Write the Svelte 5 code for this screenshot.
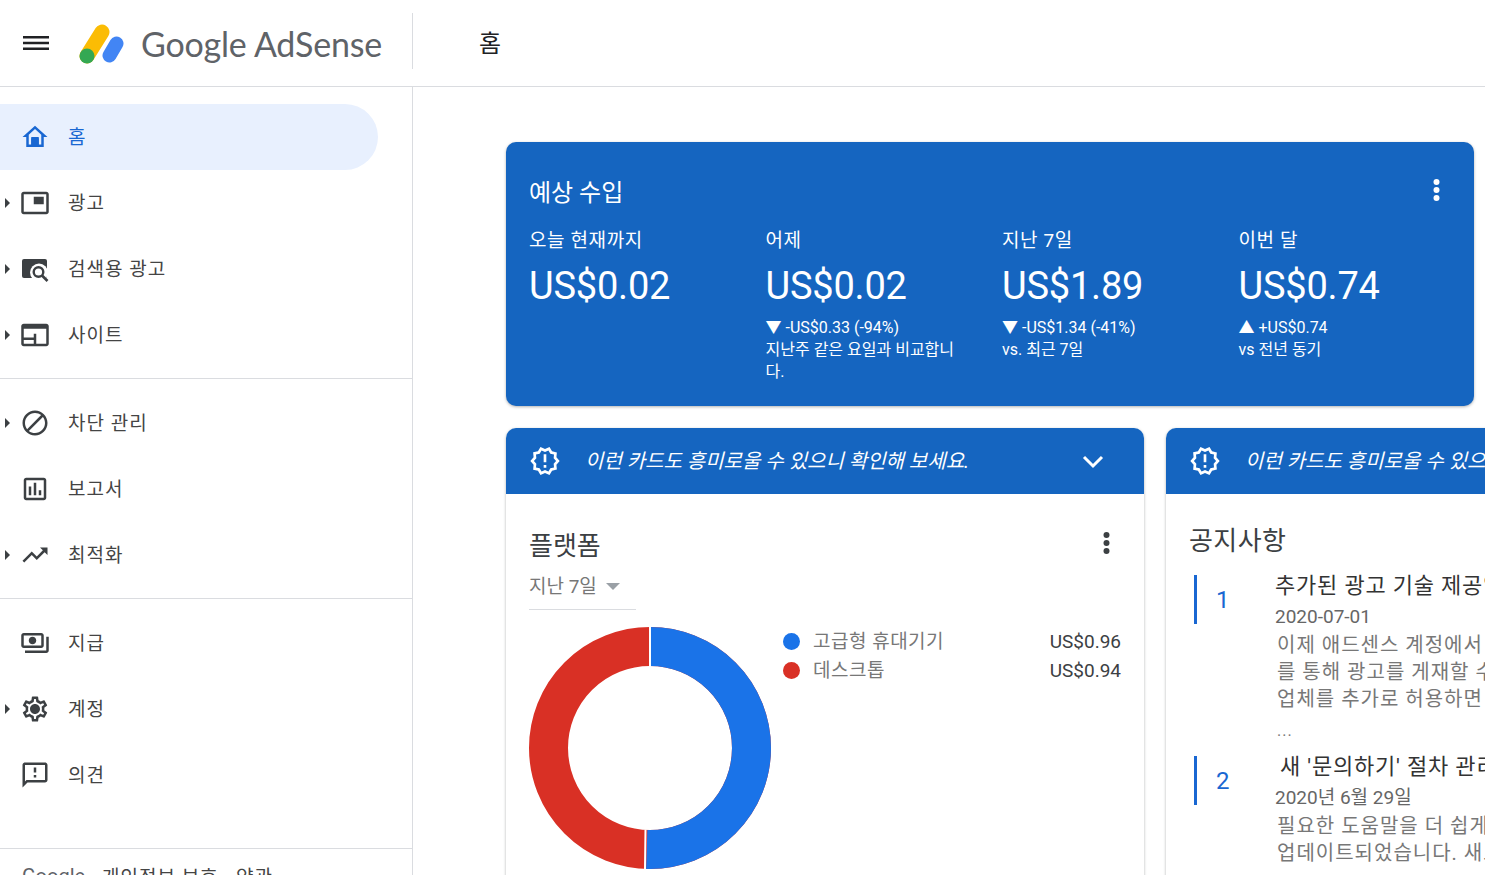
<script>
  const P = {
    ads: 'M19 7h-8v6h8V7zm2-4H3c-1.1 0-2 .9-2 2v14c0 1.1.9 1.98 2 1.98h18c1.1 0 2-.88 2-1.98V5c0-1.1-.9-2-2-2zm0 16.01H3V4.98h18v14.03z',
    block: 'M12 2C6.48 2 2 6.48 2 12s4.48 10 10 10 10-4.48 10-10S17.52 2 12 2zM4 12c0-4.42 3.58-8 8-8 1.85 0 3.55.63 4.9 1.69L5.69 16.9C4.63 15.55 4 13.85 4 12zm8 8c-1.85 0-3.55-.63-4.9-1.69L18.31 7.1C19.37 8.45 20 10.15 20 12c0 4.42-3.58 8-8 8z',
    report: 'M19 3H5c-1.1 0-2 .9-2 2v14c0 1.1.9 2 2 2h14c1.1 0 2-.9 2-2V5c0-1.1-.9-2-2-2zm0 16H5V5h14v14zM7 10h2v7H7zm4-3h2v10h-2zm4 6h2v4h-2z',
    trend: 'M16 6l2.29 2.29-4.88 4.88-4-4L2 16.59 3.41 18l6-6 4 4 6.3-6.29L22 12V6z',
    pay: 'M19 14V6c0-1.1-.9-2-2-2H3c-1.1 0-2 .9-2 2v8c0 1.1.9 2 2 2h14c1.1 0 2-.9 2-2zm-2 0H3V6h14v8zm-7-7c-1.66 0-3 1.34-3 3s1.34 3 3 3 3-1.34 3-3-1.34-3-3-3zm13 0v11c0 1.1-.9 2-2 2H4v-2h17V7h2z',
    gear: 'M19.43 12.98c.04-.32.07-.64.07-.98 0-.34-.03-.66-.07-.98l2.11-1.65c.19-.15.24-.42.12-.64l-2-3.46c-.09-.16-.26-.25-.44-.25-.06 0-.12.01-.17.03l-2.49 1c-.52-.4-1.08-.73-1.69-.98l-.38-2.65C14.46 2.18 14.25 2 14 2h-4c-.25 0-.46.18-.49.42l-.38 2.65c-.61.25-1.17.59-1.69.98l-2.49-1c-.06-.02-.12-.03-.18-.03-.17 0-.34.09-.43.25l-2 3.46c-.13.22-.07.49.12.64l2.11 1.65c-.04.32-.07.65-.07.98 0 .33.03.66.07.98l-2.11 1.65c-.19.15-.24.42-.12.64l2 3.46c.09.16.26.25.44.25.06 0 .12-.01.17-.03l2.49-1c.52.4 1.08.73 1.69.98l.38 2.65c.03.24.24.42.49.42h4c.25 0 .46-.18.49-.42l.38-2.65c.61-.25 1.17-.59 1.69-.98l2.49 1c.06.02.12.03.18.03.17 0 .34-.09.43-.25l2-3.46c.12-.22.07-.49-.12-.64l-2.11-1.65zm-1.98-1.71c.04.31.05.52.05.73 0 .21-.02.43-.05.73l-.14 1.13.89.7 1.08.84-.7 1.21-1.27-.51-1.04-.42-.9.68c-.43.32-.84.56-1.25.73l-1.06.43-.16 1.13-.2 1.35h-1.4l-.19-1.35-.16-1.13-1.06-.43c-.43-.18-.83-.41-1.23-.71l-.91-.7-1.06.43-1.27.51-.7-1.21 1.08-.84.89-.7-.14-1.13c-.03-.31-.05-.54-.05-.74s.02-.43.05-.73l.14-1.13-.89-.7-1.08-.84.7-1.21 1.27.51 1.04.42.9-.68c.43-.32.84-.56 1.25-.73l1.06-.43.16-1.13.2-1.35h1.39l.19 1.35.16 1.13 1.06.43c.43.18.83.41 1.23.71l.91.7 1.06-.43 1.27-.51.7 1.21-1.07.85-.89.7.14 1.13zM12 8c-2.21 0-4 1.79-4 4s1.79 4 4 4 4-1.79 4-4-1.79-4-4-4z',
    fb: 'M20 2H4c-1.1 0-1.99.9-1.99 2L2 22l4-4h14c1.1 0 2-.9 2-2V4c0-1.1-.9-2-2-2zm0 14H5.17L4 17.17V4h16v12zM11 12h2v2h-2zm0-6h2v4h-2z'
  };
  const releases = 'M23 12l-2.44-2.78.34-3.68-3.61-.82-1.89-3.18L12 3 8.6 1.54 6.71 4.72l-3.61.81.34 3.68L1 12l2.44 2.78-.34 3.69 3.61.82 1.89 3.18L12 21l3.4 1.46 1.89-3.18 3.61-.82-.34-3.68L23 12zm-4.51 2.11l.26 2.79-2.74.62-1.43 2.41L12 18.82l-2.58 1.11-1.43-2.41-2.74-.62.26-2.8L3.66 12l1.85-2.12-.26-2.78 2.74-.61 1.43-2.41L12 5.18l2.58-1.11 1.43 2.41 2.74.62-.26 2.79L20.34 12l-1.85 2.11zM11 15h2v2h-2zm0-8h2v6h-2z';
  const groups = [
    [
      { label: '광고', icon: 'ads', arrow: true },
      { label: '검색용 광고', icon: 'search', arrow: true },
      { label: '사이트', icon: 'site', arrow: true }
    ],
    [
      { label: '차단 관리', icon: 'block', arrow: true },
      { label: '보고서', icon: 'report' },
      { label: '최적화', icon: 'trend', arrow: true }
    ],
    [
      { label: '지급', icon: 'pay' },
      { label: '계정', icon: 'gear', arrow: true },
      { label: '의견', icon: 'fb' }
    ]
  ];
  const stats = [
    { label: '오늘 현재까지', value: 'US$0.02', lines: [] },
    { label: '어제', value: 'US$0.02', delta: '▼ -US$0.33 (-94%)', note: '지난주 같은 요일과 비교합니다.' },
    { label: '지난 7일', value: 'US$1.89', delta: '▼ -US$1.34 (-41%)', note: 'vs. 최근 7일' },
    { label: '이번 달', value: 'US$0.74', delta: '▲ +US$0.74', note: 'vs 전년 동기' }
  ];
  const hint = '이런 카드도 흥미로울 수 있으니 확인해 보세요.';
</script>

<div class="page">
  <header class="top">
    <svg class="menu" viewBox="0 0 26 14"><path d="M0 0h26v2.6H0zM0 5.7h26v2.6H0zM0 11.4h26V14H0z" /></svg>
    <svg class="logo" viewBox="79 20 46 42">
      <line x1="102" y1="28" x2="87" y2="52" stroke="#fbbc04" stroke-width="15" stroke-linecap="round" />
      <circle cx="87" cy="52" r="7.5" fill="#34a853" />
      <line x1="116.500" y1="39.500" x2="109.500" y2="51.500" stroke="#4285f4" stroke-width="14" stroke-linecap="round" />
    </svg>
    <span class="brand"><b>Google</b> AdSense</span>
    <span class="sep"></span>
    <h1>홈</h1>
  </header>
  <div class="body">
    <aside class="side">
      <div class="home">
        <svg class="icon" viewBox="0 0 24 24"><path fill="#1967d2" d="M12 5.69l5 4.500V18h-2v-6H9v6H7v-7.810l5-4.500M12 3L2 12h3v8h14v-8h3L12 3z" /><rect x="9" y="13" width="6" height="6" fill="#1967d2" /></svg>
        <span>홈</span>
      </div>
      {#each groups as group, g}
        <div class="group">
          {#each group as item}
            <div class="row">
              {#if item.arrow}<i class="arrow"></i>{/if}
              {#if item.icon === 'search'}
                <svg class="icon" viewBox="0 0 30 30">
                  <rect x="2" y="5" width="25" height="19" rx="2" fill="#3c4043" />
                  <circle cx="19" cy="18.500" r="9" fill="#fff" />
                  <circle cx="18.500" cy="18" r="4.800" fill="none" stroke="#3c4043" stroke-width="2.400" />
                  <path d="M22 21.500l5.500 5.500" stroke="#3c4043" stroke-width="2.600" />
                </svg>
              {:else if item.icon === 'site'}
                <svg class="icon" viewBox="0 0 24 24"><path fill="#3c4043" d="M21 3H3c-1.100 0-2 .9-2 2v14c0 1.100.9 2 2 2h18c1.100 0 2-.9 2-2V5c0-1.100-.9-2-2-2zM3 9h18v-2H3V5h18v14H13v-8H3v8zM3 11h8v3H3zm0 5h8v3H3zm0-11h18v4H3z" fill-rule="nonzero" /></svg>
              {:else}
                <svg class="icon" viewBox="0 0 24 24"><path fill="#3c4043" d={P[item.icon]} /></svg>
              {/if}
              <span>{item.label}</span>
            </div>
          {/each}
        </div>
      {/each}
      <div class="foot"><span class="g">Google</span><span>개인정보 보호 · 약관</span></div>
    </aside>
    <main class="main">
      <section class="summary">
        <div class="sumhead">
          <h2>예상 수입</h2>
          <svg class="dots" viewBox="0 0 6 24"><circle cx="3" cy="4" r="3" /><circle cx="3" cy="12" r="3" /><circle cx="3" cy="20" r="3" /></svg>
        </div>
        <div class="stats">
          {#each stats as s}
            <div class="stat">
              <div class="slabel">{s.label}</div>
              <div class="sval">{s.value}</div>
              {#if s.delta}
                <div class="delta">{s.delta}</div>
                <div class="note">{s.note}</div>
              {/if}
            </div>
          {/each}
        </div>
      </section>
      <div class="cards">
        <article class="card">
          <div class="hint">
            <svg viewBox="0 0 24 24"><path d={releases} /></svg>
            <em>{hint}</em>
            <svg class="chev" viewBox="0 0 24 24"><path d="M3 8l9 9 9-9" fill="none" stroke="#fff" stroke-width="3" /></svg>
          </div>
          <div class="cbody">
            <div class="chead">
              <h3>플랫폼</h3>
              <svg class="dots dark" viewBox="0 0 6 24"><circle cx="3" cy="4" r="3" /><circle cx="3" cy="12" r="3" /><circle cx="3" cy="20" r="3" /></svg>
            </div>
            <div class="range"><span>지난 7일</span><i class="caret"></i></div>
            <div class="chart">
              <svg class="donut" viewBox="0 0 242 242">
                <circle cx="121" cy="121" r="101.500" fill="none" stroke="#d93025" stroke-width="39" />
                <circle cx="121" cy="121" r="101.500" fill="none" stroke="#1a73e8" stroke-width="39" pathLength="1.9" stroke-dasharray="0.96 1.9" transform="rotate(-90 121 121)" />
                <path d="M121 0v39.500M116.500 202.500L116 242" stroke="#fff" stroke-width="2" />
              </svg>
              <div class="legend">
                <i class="dot blue"></i><span>고급형 휴대기기</span><b>US$0.96</b>
                <i class="dot red"></i><span>데스크톱</span><b>US$0.94</b>
              </div>
            </div>
          </div>
        </article>
        <article class="card">
          <div class="hint">
            <svg viewBox="0 0 24 24"><path d={releases} /></svg>
            <em>{hint}</em>
            <svg class="chev" viewBox="0 0 24 24"><path d="M3 8l9 9 9-9" fill="none" stroke="#fff" stroke-width="3" /></svg>
          </div>
          <div class="cbody">
            <h3 class="ntitle">공지사항</h3>
            <div class="notice">
              <div class="num">1</div>
              <div class="ntext">
                <div class="nhead">추가된 광고 기술 제공업체</div>
                <div class="ndate">2020-07-01</div>
                <div class="ncopy">이제 애드센스 계정에서 광고 기술 제공업체</div>
                <div class="ncopy">를 통해 광고를 게재할 수 있습니다</div>
                <div class="ncopy">업체를 추가로 허용하면 수익이</div>
                <div class="ncopy more">...</div>
              </div>
            </div>
            <div class="notice second">
              <div class="num">2</div>
              <div class="ntext">
                <div class="nhead shift">새 '문의하기' 절차 관리</div>
                <div class="ndate">2020년 6월 29일</div>
                <div class="ncopy">필요한 도움말을 더 쉽게 찾을 수 있도록</div>
                <div class="ncopy">업데이트되었습니다. 새로운</div>
              </div>
            </div>
          </div>
        </article>
      </div>
    </main>
  </div>
</div>

<style>
  :global(body) { margin: 0; background: #fff; overflow: hidden; }
  h1, h2, h3 { margin: 0; font-weight: 400; }
  .page {
    width: 1485px; height: 875px; overflow: hidden; display: flex; flex-direction: column;
    font-family: Roboto, "Noto Sans CJK KR", sans-serif; color: #3c4043;
  }
  .top { height: 86px; flex: none; display: flex; align-items: center; border-bottom: 1px solid #dadce0; box-sizing: content-box; }
  .menu { width: 26px; height: 14px; margin-left: 23px; fill: #202124; flex: none; }
  .logo { width: 46px; height: 42px; margin-left: 30px; margin-top: 4px; flex: none; }
  .brand { margin-left: 16px; width: 271px; font-size: 34px; color: #5f6368; font-family: Lato, Roboto, sans-serif; white-space: nowrap; letter-spacing: -.2px; }
  .brand b { font-weight: 400; }
  .sep { width: 1px; height: 56px; background: #dadce0; margin-top: -4px; flex: none; }
  h1 { margin-left: 66px; margin-top: -4px; font-size: 24px; color: #202124; }
  .body { flex: 1; display: flex; min-height: 0; }
  .side { width: 412px; flex: none; border-right: 1px solid #dadce0; padding-top: 17px; box-sizing: content-box; position: relative; overflow: hidden; }
  .home {
    width: 378px; height: 66px; background: #e8f0fe; border-radius: 0 33px 33px 0;
    display: flex; align-items: center; color: #1967d2; font-size: 19px; position: relative;
  }
  .home .icon { margin-left: 20px; }
  .home span, .row span { margin-left: 18px; margin-top: -4px; letter-spacing: 1px; }
  .group { border-bottom: 1px solid #dadce0; padding-bottom: 10px; margin-bottom: 11px; }
  .group:nth-of-type(4) { padding-bottom: 40px; margin-bottom: 0; }
  .row { height: 66px; display: flex; align-items: center; font-size: 19px; position: relative; color: #444; }
  .group:first-of-type { margin-top: 0; }
  .icon { width: 30px; height: 30px; margin-left: 20px; flex: none; }
  .arrow { position: absolute; left: 5px; top: 28px; width: 0; height: 0; border-left: 5px solid #3c4043; border-top: 5px solid transparent; border-bottom: 5px solid transparent; }
  .foot { display: flex; align-items: center; gap: 20px; padding: 13px 0 0 22px; font-size: 19px; color: #444; white-space: nowrap; letter-spacing: 1px; }
  .foot .g { width: 60px; font-size: 20px; letter-spacing: 0; color: #5f6368; }
  .main { flex: 1; min-width: 0; padding: 55px 0 0 93px; overflow: hidden; }
  .summary {
    width: 968px; height: 264px; box-sizing: border-box; background: #1565c0; color: #fff;
    border-radius: 10px; box-shadow: 0 1px 3px rgba(60,64,67,.4); padding: 32px 23px 0;
  }
  .sumhead { display: flex; justify-content: space-between; align-items: center; height: 32px; }
  h2 { font-size: 24px; }
  .dots { width: 7px; height: 24px; fill: #fff; margin-right: 11px; flex: none; }
  .dots.dark { fill: #3c4043; margin-right: 11px; }
  .stats { display: flex; margin-top: 21px; }
  .stat { width: 236.500px; flex: none; box-sizing: border-box; padding-right: 30px; }
  .slabel { font-size: 19px; line-height: 28px; letter-spacing: .6px; }
  .sval { font-size: 38px; line-height: 44px; margin-top: 9px; letter-spacing: -.2px; }
  .delta, .note { font-size: 16px; line-height: 22px; }
  .delta { margin-top: 9px; }
  .cards { display: flex; gap: 22px; margin-top: 22px; width: 1400px; }
  .card {
    width: 638px; flex: none; height: 600px; border-radius: 10px 10px 0 0; background: #fff;
    box-shadow: 0 1px 3px rgba(60,64,67,.4);
  }
  .hint {
    height: 66px; background: #1565c0; border-radius: 10px 10px 0 0; color: #fff; display: flex; align-items: center;
    padding-left: 23px; white-space: nowrap; overflow: hidden;
  }
  .hint svg { width: 32px; height: 32px; fill: #fff; flex: none; }
  .hint em { margin-left: 24px; font-size: 20px; flex: none; width: 490px; margin-top: -4px; }
  .hint .chev { width: 24px; height: 24px; margin-left: 6px; fill: none; }
  .cbody { padding: 30px 23px 0; }
  .chead { display: flex; justify-content: space-between; align-items: center; height: 38px; }
  h3 { font-size: 26px; color: #3c4043; }
  .range { margin-top: 5px; width: 107px; height: 43px; border-bottom: 1px solid #dadce0; display: flex; align-items: center; font-size: 19px; color: #777; box-sizing: border-box; padding-bottom: 7px; }
  .caret { margin-left: 9px; margin-top: 3px; border-top: 7px solid #9aa0a6; border-left: 7px solid transparent; border-right: 7px solid transparent; }
  .chart { display: flex; margin-top: 17px; }
  .donut { width: 242px; height: 242px; flex: none; }
  .legend { margin-left: 12px; width: 338px; height: 58px; display: grid; grid-template-columns: 17px 1fr auto; align-items: center; grid-auto-rows: 29px; column-gap: 13px; }
  .legend span { font-size: 19px; color: #777; letter-spacing: .5px; margin-top: -4px; }
  .legend b { font-weight: 400; font-size: 19px; color: #3c4043; }
  .dot { width: 17px; height: 17px; border-radius: 50%; }
  .blue { background: #1a73e8; }
  .red { background: #d93025; }
  .ntitle { height: 38px; line-height: 34px; letter-spacing: .4px; }
  .notice { display: grid; grid-template-columns: 81px 1fr; margin: 8px 0 0 5px; white-space: nowrap; }
  .notice.second { margin-top: 7px; }
  .num { height: 49px; border-left: 3px solid #1967d2; color: #1967d2; font-size: 24px; display: flex; align-items: center; padding-left: 19px; margin-top: 5px; box-sizing: border-box; }
  .nhead { font-size: 22px; line-height: 32px; color: #333; letter-spacing: .8px; }
  .shift { margin-left: 5px; }
  .ndate { font-size: 19px; line-height: 30px; color: #666; }
  .ncopy { font-size: 20px; line-height: 27px; color: #777; margin-left: 2px; letter-spacing: 1px; }
  .more { font-size: 16px; margin-top: 4px; }
</style>
